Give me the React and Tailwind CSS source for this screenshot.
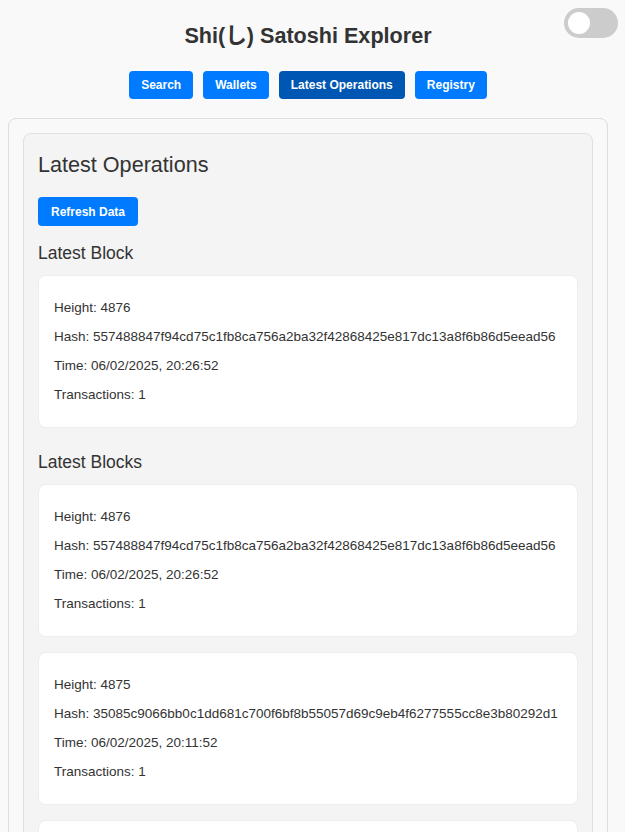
import React from 'react';

const FONT = { fontFamily: '"Liberation Sans", Arial, "Noto Sans CJK JP", sans-serif' };

const latestBlock = {
  height: 4876,
  hash: '557488847f94cd75c1fb8ca756a2ba32f42868425e817dc13a8f6b86d5eead56',
  time: '06/02/2025, 20:26:52',
  txs: 1,
};

const blocks = [
  latestBlock,
  {
    height: 4875,
    hash: '35085c9066bb0c1dd681c700f6bf8b55057d69c9eb4f6277555cc8e3b80292d1',
    time: '06/02/2025, 20:11:52',
    txs: 1,
  },
  {
    height: 4874,
    hash: '0c3f2a8e9d1b7f6a45e2c9d8b3a17f60e5d4c2b1a09f8e7d6c5b4a3928170f6e',
    time: '06/02/2025, 19:56:52',
    txs: 1,
  },
];

function BlockCard({ block }) {
  return (
    <div className="flex flex-col gap-[13px] rounded-lg border border-[#eeeeee] bg-white px-[15px] py-[24px] text-[13.5px] leading-4 text-[#333]">
      <p>Height: {block.height}</p>
      <p className="whitespace-nowrap">Hash: {block.hash}</p>
      <p>Time: {block.time}</p>
      <p>Transactions: {block.txs}</p>
    </div>
  );
}

function NavButton({ label, active }) {
  return (
    <button
      type="button"
      className={`h-7 rounded px-3 text-[12px] font-bold text-white ${
        active ? 'bg-[#0056b3]' : 'bg-[#007bff]'
      }`}
    >
      {label}
    </button>
  );
}

export default function App() {
  return (
    <div className="relative min-h-screen bg-[#f9f9f9] px-2 text-[#333]" style={FONT}>
      {/* theme toggle */}
      <div className="absolute right-[7px] top-2 h-[30px] w-[54px] rounded-full bg-[#cccccc]">
        <div className="absolute left-[4px] top-[4px] h-[22px] w-[22px] rounded-full bg-white" />
      </div>

      <div className="w-[600px]">
        <h1 className="pt-[23px] text-center text-[21.6px] font-bold leading-[26px]">
          Shi(し) Satoshi Explorer
        </h1>

        <nav className="mt-[22px] flex justify-center gap-[10px]">
          <NavButton label="Search" />
          <NavButton label="Wallets" />
          <NavButton label="Latest Operations" active />
          <NavButton label="Registry" />
        </nav>

        <div className="mt-[19px] rounded-lg border border-[#dddddd] bg-[#f9f9f9] p-[14px]">
          <div className="rounded-lg border border-[#e0e0e0] bg-[#f4f4f4] px-[14px] pb-6 pt-[18px]">
            <h2 className="text-[21.6px] leading-[26px]">Latest Operations</h2>

            <button
              type="button"
              className="mt-[19px] h-[29px] rounded bg-[#007bff] px-[13px] text-[12px] font-bold text-white"
            >
              Refresh Data
            </button>

            <h3 className="mt-[17px] text-[17.5px] leading-5">Latest Block</h3>
            <div className="mt-3">
              <BlockCard block={latestBlock} />
            </div>

            <h3 className="mt-[24px] text-[17.5px] leading-5">Latest Blocks</h3>
            <div className="mt-3 flex flex-col gap-[15px]">
              {blocks.map((b) => (
                <BlockCard key={b.height} block={b} />
              ))}
            </div>
          </div>
        </div>
      </div>
    </div>
  );
}
